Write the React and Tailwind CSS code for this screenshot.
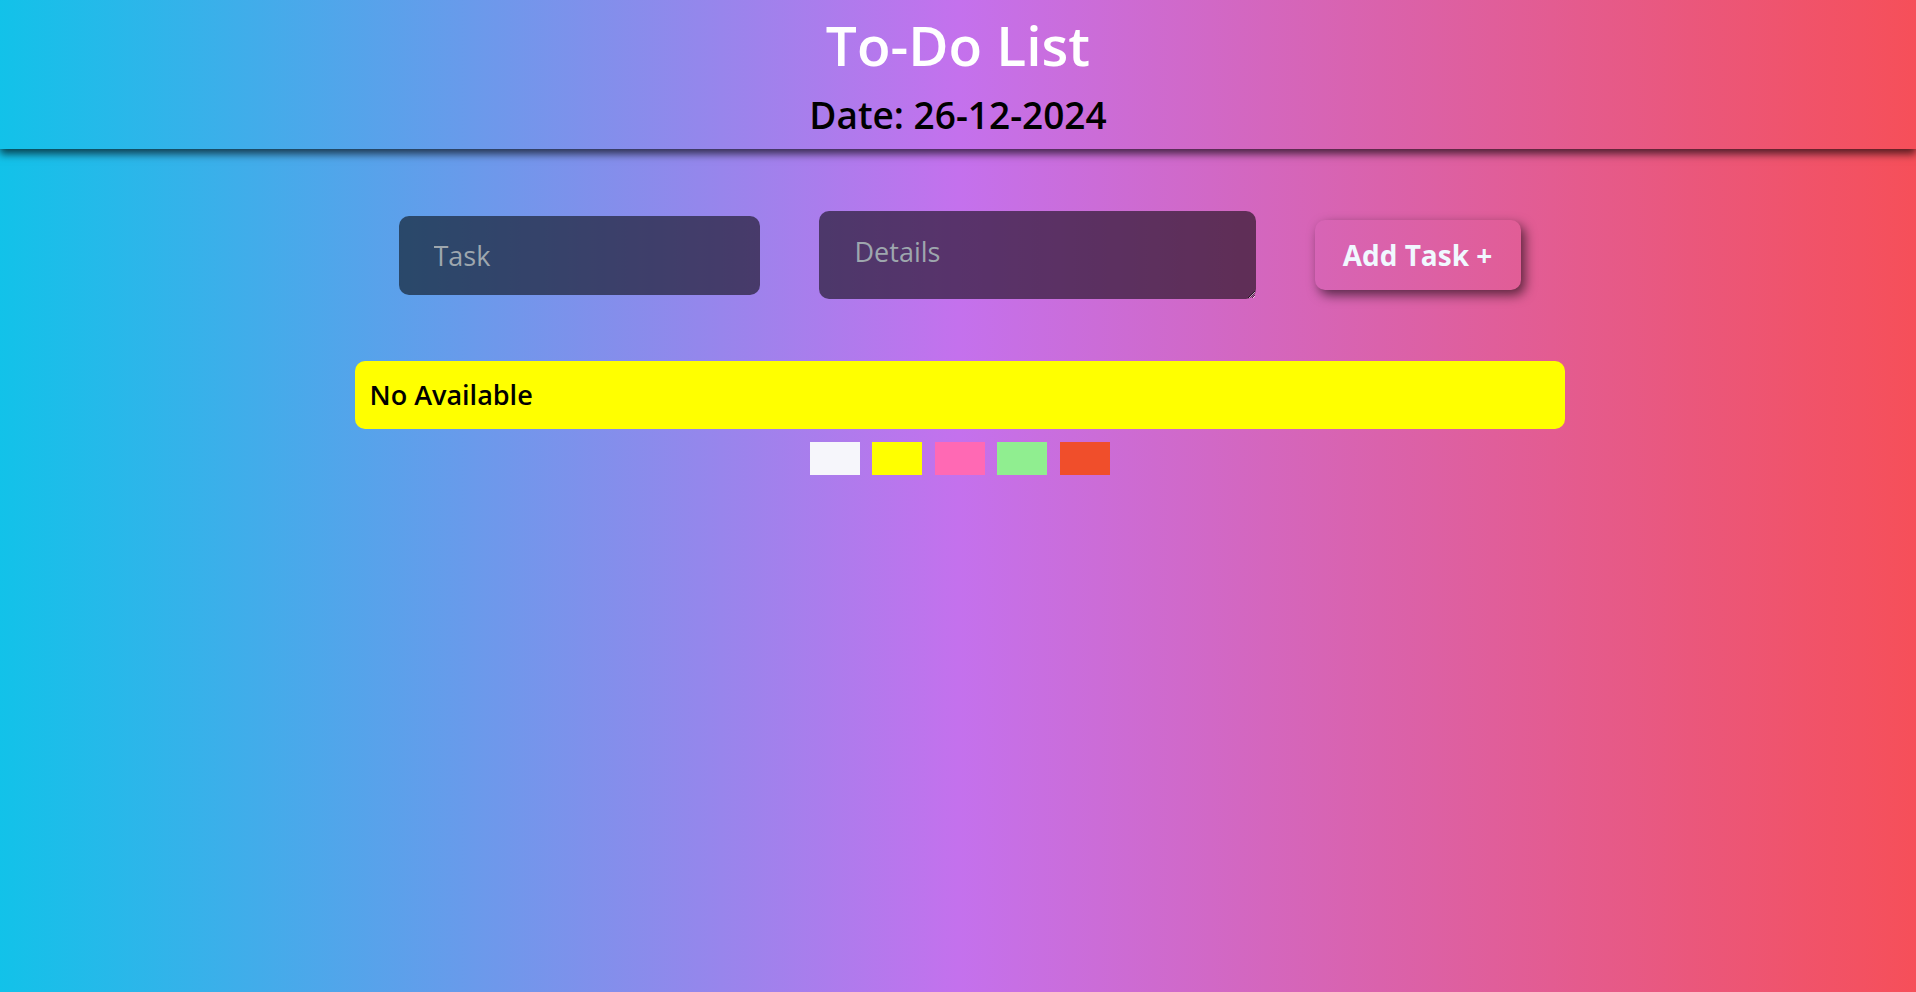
import React, { useState } from 'react';

const swatches = ['#f6f6fb', '#ffff00', '#ff69b4', '#90ee90', '#f04e2b'];

export default function App() {
  const [task, setTask] = useState('');
  const [details, setDetails] = useState('');
  const [noteColor, setNoteColor] = useState('#ffff00');

  return (
    <div className="min-h-screen bg-[linear-gradient(to_right,#12c2e9,#c471ed,#f64f59)] font-['Open_Sans',sans-serif]">
      <header className="flex flex-col items-center pt-[17px] pb-[16px] bg-[linear-gradient(to_right,#12c2e9,#c471ed,#f64f59)] shadow-[0_5px_8px_rgba(0,0,0,0.65)]">
        <h1 className="text-[55px] leading-[56px] font-semibold text-white">To-Do List</h1>
        <h2 className="mt-[24px] text-[37px] leading-[36px] font-semibold text-black">Date: 26-12-2024</h2>
      </header>

      <div className="mt-[62px] flex items-center justify-center gap-[59px] pl-[3px]">
        <input
          type="text"
          value={task}
          onChange={(e) => setTask(e.target.value)}
          placeholder="Task"
          className="w-[361px] h-[79px] rounded-[10px] bg-black/55 px-[35px] text-[27px] text-white placeholder:text-[#9ea7ae] outline-none"
        />
        <textarea
          value={details}
          onChange={(e) => setDetails(e.target.value)}
          placeholder="Details"
          className="w-[437px] h-[88px] rounded-[10px] bg-black/55 px-[36px] pt-[21px] pb-[19px] text-[27px] text-white placeholder:text-[#9ea7ae] outline-none"
        />
        <button className="w-[206px] h-[70px] rounded-[10px] bg-transparent text-[28px] font-bold text-[#f0f8ff] shadow-[4px_5px_12px_rgba(0,0,0,0.6)]">
          Add Task +
        </button>
      </div>

      <div className="mt-[62px] flex flex-col items-center pl-[3px]">
        <div
          className="w-[1210px] h-[68px] rounded-[10px] flex items-center px-[15px]"
          style={{ backgroundColor: noteColor }}
        >
          <p className="text-[27px] font-semibold text-black">No Available</p>
        </div>
        <div className="mt-[13px] flex gap-[12.5px]">
          {swatches.map((c) => (
            <button
              key={c}
              onClick={() => setNoteColor(c)}
              className="w-[50px] h-[33px]"
              style={{ backgroundColor: c }}
            />
          ))}
        </div>
      </div>
    </div>
  );
}
